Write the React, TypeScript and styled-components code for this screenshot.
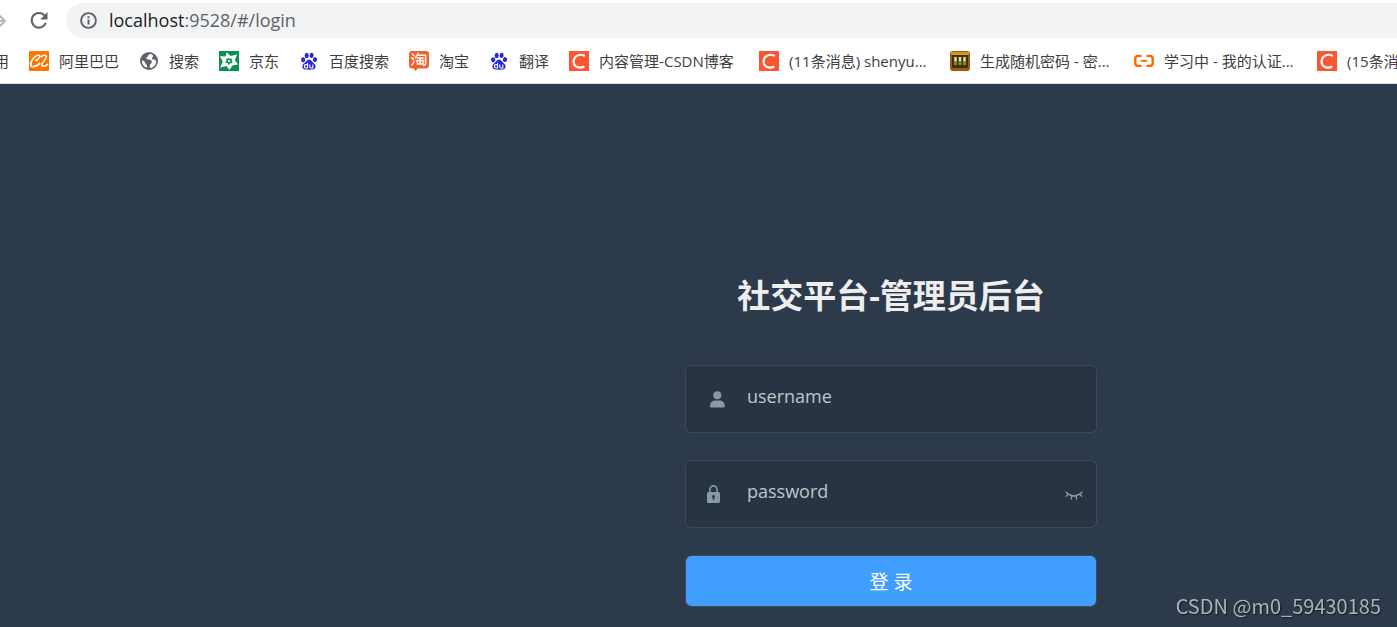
import React from "react";
import styled, { createGlobalStyle } from "styled-components";

const GlobalStyle = createGlobalStyle`
  * { box-sizing: border-box; }
  html, body, #root { height: 100%; }
  body {
    margin: 0;
    overflow: hidden;
    background: #2d3a4b;
    font-family: "Open Sans", "Noto Sans CJK SC", sans-serif;
  }
`;

const Page = styled.div`
  display: flex;
  flex-direction: column;
  min-height: 100%;
  overflow: hidden;
`;

const Chrome = styled.header`
  background: #fff;
  border-bottom: 1px solid #d9dbde;
  overflow: hidden;
`;

const Toolbar = styled.div`
  display: flex;
  align-items: center;
  padding-top: 3px;
`;

const ToolButton = styled.button<{ $tone: string; $width: number }>`
  display: flex;
  align-items: center;
  justify-content: flex-start;
  width: ${(p) => p.$width}px;
  height: 34px;
  padding: 0;
  border: 0;
  background: none;
  color: ${(p) => p.$tone};
`;

const AddressBar = styled.div`
  display: flex;
  flex: 1;
  align-items: center;
  gap: 12px;
  height: 35px;
  padding-left: 14px;
  border-radius: 18px 0 0 18px;
  background: #f1f3f4;
  color: #5f6368;
`;

const Address = styled.span`
  padding-bottom: 2px;
  font-size: 18px;
  line-height: 24px;
  white-space: nowrap;
`;

const Host = styled.span`
  color: #202124;
`;

const Bookmarks = styled.nav`
  display: flex;
  align-items: center;
  gap: 20px;
  height: 45px;
  margin-left: -6px;
  white-space: nowrap;
`;

const Bookmark = styled.a`
  display: flex;
  flex: none;
  align-items: center;
  gap: 10px;
  color: #3c4043;
  font-size: 15px;
  line-height: 20px;
  text-decoration: none;

  svg { flex: none; }
`;

const BookmarkLabel = styled.span<{ $width?: number }>`
  width: ${(p) => (p.$width ? `${p.$width}px` : "auto")};
`;

const Main = styled.main`
  display: flex;
  flex: 1;
  justify-content: center;
  padding: 188px 0 20px 385px;
`;

const LoginForm = styled.form`
  display: flex;
  flex-direction: column;
  width: 412px;
`;

const Title = styled.h1`
  margin: 0 0 45px;
  color: #eee;
  font-size: 33px;
  font-weight: 700;
  line-height: 48px;
  text-align: center;
  white-space: nowrap;
`;

const Field = styled.div`
  display: flex;
  align-items: center;
  height: 68px;
  margin-bottom: 27px;
  padding: 0 12px 0 21px;
  border: 1px solid rgba(255, 255, 255, 0.1);
  border-radius: 6px;
  background: rgba(0, 0, 0, 0.1);
  color: #889aa4;
`;

const FieldIcon = styled.label`
  display: flex;
  flex: none;
`;

const Input = styled.input`
  flex: 1;
  min-width: 0;
  height: 60px;
  padding: 0 16px 6px 20px;
  border: 0;
  outline: 0;
  background: transparent;
  color: #fff;
  font-family: inherit;
  font-size: 18px;

  &::placeholder { color: #c0c4cc; opacity: 1; }
`;

const EyeButton = styled.button`
  display: flex;
  padding: 0;
  border: 0;
  background: none;
  color: inherit;
`;

const SubmitButton = styled.button`
  height: 52px;
  padding: 2px 0 0;
  border: 1px solid #3f4956;
  border-radius: 6px;
  background: #409eff;
  background-clip: padding-box;
  color: #fff;
  font-family: inherit;
  font-size: 19px;
  line-height: 24px;
`;

const Watermark = styled.div`
  position: fixed;
  right: 16px;
  bottom: 7px;
  color: #adb2b8;
  font-family: "Noto Sans CJK SC", sans-serif;
  font-size: 20px;
  line-height: 28px;
  text-shadow: 1px 1px 1px rgba(0, 0, 0, 0.5);
`;

const ForwardIcon = () => (
  <svg width="8" height="16" viewBox="0 0 8 16" fill="none" stroke="currentColor" strokeWidth="2">
    <path d="M-6 8H5M-1 2L5 8L-1 14" />
  </svg>
);

const ReloadIcon = () => (
  <svg width="18" height="18" viewBox="0 0 18 18">
    <path d="M14.6 3.6A7.3 7.3 0 1 0 15.8 10.9" fill="none" stroke="currentColor" strokeWidth="2.1" />
    <path d="M17.5 0V7.4H10.2Z" fill="currentColor" />
  </svg>
);

const InfoIcon = () => (
  <svg width="17" height="17" viewBox="0 0 17 17">
    <circle cx="8.5" cy="8.5" r="7.4" fill="none" stroke="currentColor" strokeWidth="1.9" />
    <path d="M7.5 4.2h2v2h-2zM7.5 7.6h2v5h-2z" fill="currentColor" />
  </svg>
);

const AlibabaIcon = () => (
  <svg width="20" height="20" viewBox="0 0 20 20">
    <rect width="20" height="20" rx="1" fill="#ff7300" />
    <g fill="none" stroke="#fff" strokeLinecap="round" strokeLinejoin="round">
      <path d="M4.6 7C6.8 4.4 10.6 3.4 10.8 5C11 6.4 8.6 8.6 6.4 9.4L8.4 9.6" strokeWidth="1.4" />
      <path d="M4.6 7C2.2 9.8 .8 14 2.6 15.2C4.6 16.4 8.6 14.8 10.6 12.4" strokeWidth="1.8" />
      <path d="M12.2 5.6C14.6 4 17.4 3.8 17.4 5.6C17.4 8 13 11.4 12.6 13.8C12.4 16 16 15.6 18.6 13.4" strokeWidth="1.5" />
    </g>
  </svg>
);

const GlobeIcon = () => (
  <svg width="20" height="20" viewBox="0 0 20 20">
    <circle cx="10" cy="10" r="9" fill="#5f6368" />
    <path
      d="M10.8 3C9 4 9.4 5.6 7.6 6.6C6.4 7.4 8.4 8.4 10.4 8.6C12.4 9 13.6 10.4 12.4 12.2C11.4 13.4 10.8 13.6 10.8 15V17C14.4 16.6 17 13.8 17.1 10.4C16.6 8.8 15.8 8.8 14.4 8.6C12.8 8.4 12.6 7.4 13.4 6.6C14.4 5.6 14 4.6 13.6 3.8C12.8 3.2 11.8 3 10.8 3ZM2.9 9.6C2.8 13.4 5 15.8 7.8 16.8C8.4 15.6 8.4 14.4 7.2 13.6C6 12.8 6.4 11.4 5.4 10.6C4.6 10 3.6 9.6 2.9 9.6Z"
      fill="#fff"
    />
  </svg>
);

const JdIcon = () => (
  <svg width="20" height="20" viewBox="0 0 20 20">
    <rect width="20" height="20" fill="#0c9155" />
    <path
      d="M7.6 1.2L11.6 5L18.2 3.4L15.8 9L19 13.6L13.4 14.4L10.4 19L7.4 15L1.2 16.4L3.8 10.6L1 5.2L6.6 5.6Z"
      fill="#fff"
    />
    <path d="M9 6.4L11 8L13.6 7.6L12.6 10L13.8 12.2L11.2 12.2L9.6 14.2L8.6 12L6 11.8L7.6 9.8L6.6 7.8L8.8 8Z" fill="#0c9155" />
    <circle cx="10" cy="10.1" r="1.1" fill="#fff" />
  </svg>
);

const BaiduIcon = () => (
  <svg width="20" height="20" viewBox="0 0 20 20" fill="#2529d8">
    <ellipse cx="4.2" cy="8.8" rx="2.1" ry="2.6" transform="rotate(-12 4.2 8.8)" />
    <ellipse cx="7.7" cy="4.4" rx="2" ry="2.7" />
    <ellipse cx="12.6" cy="4.4" rx="2" ry="2.7" transform="rotate(10 12.6 4.4)" />
    <ellipse cx="16" cy="8.6" rx="2.1" ry="2.5" transform="rotate(12 16 8.6)" />
    <path d="M10 8.6C12.4 8.6 13 11 15 12.6C17.6 14.6 17 18.4 13.6 18.6C11.6 18.7 8.4 18.7 6.4 18.6C3 18.4 2.4 14.6 5 12.6C7 11 7.6 8.6 10 8.6Z" />
    <path
      d="M8.6 11.8V17H7A1.7 1.7 0 0 1 7 13.6H8.6M10.8 13.4V15.8Q10.8 17 12 17H13.8V13.4"
      fill="none"
      stroke="#fff"
      strokeWidth="1.1"
    />
  </svg>
);

const TaobaoIcon = () => (
  <svg width="20" height="20" viewBox="0 0 20 20">
    <path d="M3 0H17Q20 0 20 3V14Q20 17.4 17 17.4H8.6L6.6 20L4.8 17.4H3Q0 17.4 0 14V3Q0 0 3 0Z" fill="#f6602c" />
    <path
      d="M3.2 3L5 4.6M2.6 6.8L4.4 8.2M2.8 14Q4.6 12.6 5 10.4M9 2.4Q8.2 5 6.4 6.6M8.4 4.2H16.6V12.8Q16.6 14.4 14.6 14.2M8.4 7H14.2M7.4 9.4H14.8M11.2 7V13.2M8.4 10.8V13H14V10.8"
      fill="none"
      stroke="#fff"
      strokeWidth="1.5"
      strokeLinecap="round"
    />
  </svg>
);

const CsdnIcon = () => (
  <svg width="20" height="20" viewBox="0 0 20 20">
    <rect width="20" height="20" fill="#fc5531" />
    <path d="M15.8 5C11 2.2 4.8 4.4 4.6 10.4C4.6 16 10 18 15.4 15.4" fill="none" stroke="#fff" strokeWidth="2.2" />
  </svg>
);

const PasswordIcon = () => (
  <svg width="20" height="20" viewBox="0 0 20 20">
    <rect width="20" height="20" rx="3" fill="#9c5a10" />
    <rect x="1" y="1" width="18" height="3" rx="1" fill="#d3942a" />
    <rect x="2" y="4" width="16" height="13" rx="1" fill="#3a340c" />
    <path d="M4 6H7V14H4ZM8.5 6H11.5V14H8.5ZM13 6H16V14H13Z" fill="#8d8532" />
    <path d="M4.5 6H6.5V10H4.5ZM9 6H11V10H9ZM13.5 6H15.5V10H13.5Z" fill="#e6dfa0" />
  </svg>
);

const AliyunIcon = () => (
  <svg width="20" height="20" viewBox="0 0 20 20" fill="none" stroke="#ff6a00">
    <path d="M7.6 4.9H4.2Q1.3 4.9 1.3 7.6V12.2Q1.3 14.9 4.2 14.9H7.6M12.4 4.9H15.8Q18.7 4.9 18.7 7.6V12.2Q18.7 14.9 15.8 14.9H12.4" strokeWidth="2.4" />
    <path d="M6.8 9.9H13.2" strokeWidth="1.8" />
  </svg>
);

const UserIcon = () => (
  <svg width="20" height="20" viewBox="0 0 20 20" fill="currentColor">
    <circle cx="10.3" cy="6.3" r="4" />
    <path d="M3 17.4C3 13.8 5.4 11.6 8 11.6H12.8C15.6 11.6 17.7 13.8 17.7 17.4Q17.7 18.5 16.6 18.5H4.1Q3 18.5 3 17.4Z" />
  </svg>
);

const LockIcon = () => (
  <svg width="20" height="20" viewBox="0 0 20 20">
    <path d="M2.9 9V6A3.6 4.1 0 0 1 10.1 6V9" fill="none" stroke="currentColor" strokeWidth="1.6" />
    <rect x="0" y="8" width="13" height="11" rx="1.6" fill="currentColor" />
    <path d="M6.5 11A1.5 1.5 0 0 1 7.2 13.8V16H5.8V13.8A1.5 1.5 0 0 1 6.5 11Z" fill="#283443" />
  </svg>
);

const ClosedEyeIcon = () => (
  <svg width="20" height="20" viewBox="0 0 20 20" fill="none" stroke="currentColor" strokeWidth="1.3" strokeLinecap="round">
    <path d="M2 8.2Q10 15.8 18 8.2M4.2 10.2L2.2 12.2M15.8 10.2L17.8 12.2M7.8 12.2L7.2 15M12.2 12.2L12.8 15" />
  </svg>
);

const bookmarks = [
  { icon: <AlibabaIcon />, label: "阿里巴巴" },
  { icon: <GlobeIcon />, label: "搜索" },
  { icon: <JdIcon />, label: "京东" },
  { icon: <BaiduIcon />, label: "百度搜索" },
  { icon: <TaobaoIcon />, label: "淘宝" },
  { icon: <BaiduIcon />, label: "翻译" },
  { icon: <CsdnIcon />, label: "内容管理-CSDN博客", width: 140 },
  { icon: <CsdnIcon />, label: "(11条消息) shenyu...", width: 141 },
  { icon: <PasswordIcon />, label: "生成随机密码 - 密...", width: 134 },
  { icon: <AliyunIcon />, label: "学习中 - 我的认证...", width: 133 },
  { icon: <CsdnIcon />, label: "(15条消息)" },
];

export default function App() {
  return (
    <Page>
      <GlobalStyle />
      <Chrome>
        <Toolbar>
          <ToolButton type="button" aria-label="Forward" $tone="#b4b6b9" $width={30}>
            <ForwardIcon />
          </ToolButton>
          <ToolButton type="button" aria-label="Reload" $tone="#5f6368" $width={36}>
            <ReloadIcon />
          </ToolButton>
          <AddressBar>
            <InfoIcon />
            <Address>
              <Host>localhost</Host>:9528/#/login
            </Address>
          </AddressBar>
        </Toolbar>
        <Bookmarks>
          <Bookmark href="#">用</Bookmark>
          {bookmarks.map((item, index) => (
            <Bookmark href="#" key={index}>
              {item.icon}
              <BookmarkLabel $width={item.width}>{item.label}</BookmarkLabel>
            </Bookmark>
          ))}
        </Bookmarks>
      </Chrome>
      <Main>
        <LoginForm onSubmit={(event) => event.preventDefault()}>
          <Title>社交平台-管理员后台</Title>
          <Field>
            <FieldIcon htmlFor="username" aria-label="username">
              <UserIcon />
            </FieldIcon>
            <Input id="username" type="text" placeholder="username" />
          </Field>
          <Field>
            <FieldIcon htmlFor="password" aria-label="password">
              <LockIcon />
            </FieldIcon>
            <Input id="password" type="password" placeholder="password" />
            <EyeButton type="button" aria-label="Show password">
              <ClosedEyeIcon />
            </EyeButton>
          </Field>
          <SubmitButton type="submit">登 录</SubmitButton>
        </LoginForm>
      </Main>
      <Watermark>CSDN @m0_59430185</Watermark>
    </Page>
  );
}
